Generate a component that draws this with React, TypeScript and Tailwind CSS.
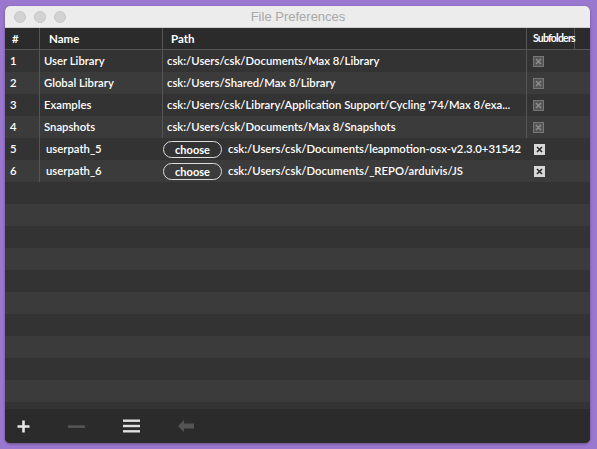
type Row = {
  n: number
  name: string
  path: string
  user?: boolean
}

const rows: Row[] = [
  { n: 1, name: 'User Library', path: 'csk:/Users/csk/Documents/Max 8/Library' },
  { n: 2, name: 'Global Library', path: 'csk:/Users/Shared/Max 8/Library' },
  { n: 3, name: 'Examples', path: "csk:/Users/csk/Library/Application Support/Cycling '74/Max 8/exa..." },
  { n: 4, name: 'Snapshots', path: 'csk:/Users/csk/Documents/Max 8/Snapshots' },
  { n: 5, name: 'userpath_5', path: 'csk:/Users/csk/Documents/leapmotion-osx-v2.3.0+31542', user: true },
  { n: 6, name: 'userpath_6', path: 'csk:/Users/csk/Documents/_REPO/arduivis/JS', user: true },
]

function Check({ on }: { on: boolean }) {
  return (
    <div
      className={
        'w-[11px] h-[11px] border flex items-center justify-center ' +
        (on ? 'border-[#d8d8d8] bg-[#d8d8d8]' : 'border-[#777] bg-[#555]')
      }
    >
      <svg width="7" height="7" viewBox="0 0 7 7">
        <path d="M1 1L6 6M6 1L1 6" stroke={on ? '#2a2a2a' : '#8a8a8a'} strokeWidth="1.6" />
      </svg>
    </div>
  )
}

export default function App() {
  const empty = Array.from({ length: 10 })
  return (
    <div className="w-[597px] h-[449px] bg-[#9b78cf] pt-[6px] pl-[5px] font-['Lato',sans-serif]">
      <div className="w-[585px] h-[437px] rounded-[5px] overflow-hidden flex flex-col bg-[#333] shadow-[0_1px_3px_rgba(0,0,0,0.35)]">
        {/* title bar */}
        <div className="h-[22px] bg-[#ececec] border-b border-[#cfcfcf] flex items-center shrink-0">
          <div className="flex gap-[8px] pl-[9px]">
            <span className="w-[12px] h-[12px] rounded-full bg-[#d3d3d3] border border-[#c6c6c6]" />
            <span className="w-[12px] h-[12px] rounded-full bg-[#d3d3d3] border border-[#c6c6c6]" />
            <span className="w-[12px] h-[12px] rounded-full bg-[#d3d3d3] border border-[#c6c6c6]" />
          </div>
          <div className="flex-1 text-center text-[13px] text-[#a8a8a8] font-['Liberation_Sans',sans-serif] pr-[60px]">
            File Preferences
          </div>
        </div>

        {/* header */}
        <div className="h-[22px] bg-[#2b2b2b] border-b border-[#555] flex text-white font-bold shrink-0 text-[11.5px]">
          <div className="w-[35px] pl-[7px] flex items-center border-r border-[#555]">#</div>
          <div className="w-[123px] pl-[9px] flex items-center border-r border-[#555]">Name</div>
          <div className="w-[364px] pl-[8px] flex items-center border-r border-[#555]">Path</div>
          <div className="w-[48px] pl-[6px] flex items-center border-r border-[#555] text-[10.5px] tracking-[-0.8px] whitespace-nowrap">
            Subfolders
          </div>
          <div className="flex-1" />
        </div>

        {/* rows */}
        <div className="flex-1 flex flex-col overflow-hidden">
          {rows.map((r, i) => (
            <div
              key={r.n}
              className={'h-[22px] shrink-0 flex text-white text-[11.3px] font-semibold ' + (i % 2 === 0 ? 'bg-[#333]' : 'bg-[#3b3b3b]')}
            >
              <div className="w-[35px] pl-[5px] flex items-center border-r border-[#555]">{r.n}</div>
              {r.user ? (
                <>
                  <div className="w-[123px] pl-[6px] flex items-center">{r.name}</div>
                  <div className="w-[364px] flex items-center">
                    <span className="w-[59px] h-[17px] rounded-full border border-[#ddd] flex items-center justify-center font-bold text-[11px] leading-none">
                      choose
                    </span>
                    <span className="pl-[6px] whitespace-nowrap">{r.path}</span>
                  </div>
                  <div className="w-[48px] pl-[7px] flex items-center">
                    <Check on />
                  </div>
                </>
              ) : (
                <>
                  <div className="w-[123px] pl-[4px] flex items-center border-r border-[#555]">{r.name}</div>
                  <div className="w-[364px] pl-[4px] flex items-center border-r border-[#555] whitespace-nowrap">{r.path}</div>
                  <div className="w-[48px] pl-[6px] flex items-center">
                    <Check on={false} />
                  </div>
                </>
              )}
            </div>
          ))}
          {empty.map((_, i) => (
            <div key={i} className={'h-[22px] shrink-0 ' + (i % 2 === 0 ? 'bg-[#333]' : 'bg-[#3b3b3b]')} />
          ))}
        </div>

        {/* footer */}
        <div className="h-[34px] bg-[#2b2b2b] shrink-0 flex items-center pl-[12px] gap-[38px]">
          <svg width="13" height="13" viewBox="0 0 13 13">
            <path d="M6.5 0.5V12.5M0.5 6.5H12.5" stroke="#e8e8e8" strokeWidth="2.6" />
          </svg>
          <svg width="17" height="13" viewBox="0 0 17 13">
            <rect x="0" y="5.3" width="17" height="2.6" fill="#555" />
          </svg>
          <svg width="17" height="14" viewBox="0 0 17 14">
            <rect x="0" y="0.5" width="17" height="2.4" fill="#e0e0e0" />
            <rect x="0" y="5.8" width="17" height="2.4" fill="#e0e0e0" />
            <rect x="0" y="11.1" width="17" height="2.4" fill="#e0e0e0" />
          </svg>
          <svg width="16" height="12" viewBox="0 0 16 12">
            <path d="M0 6L6 0V3.5H16V8.5H6V12Z" fill="#555" />
          </svg>
        </div>
      </div>
    </div>
  )
}
